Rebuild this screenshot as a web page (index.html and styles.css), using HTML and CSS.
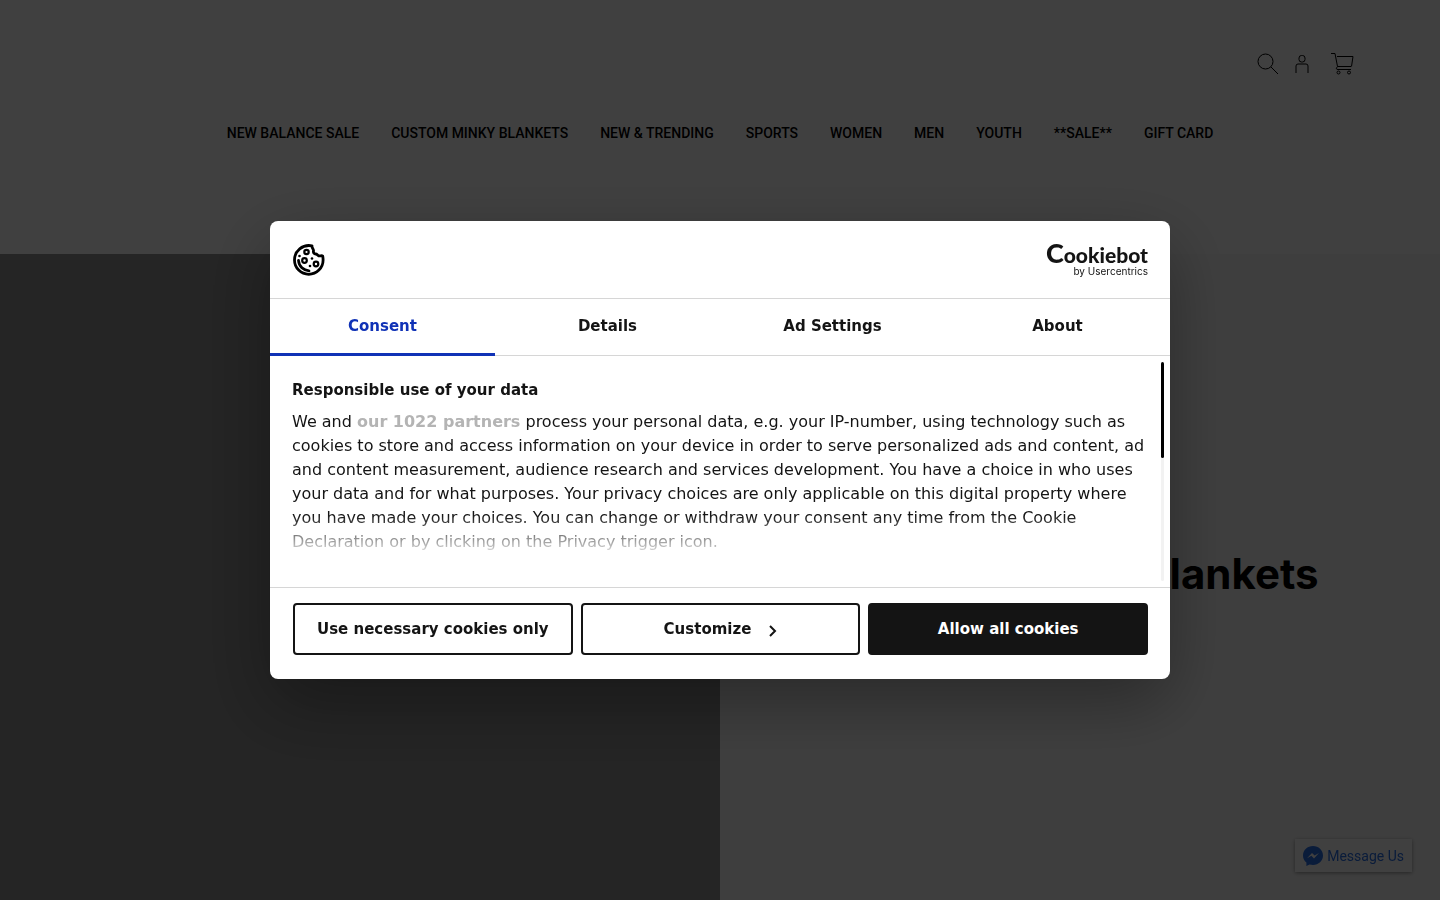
FILE: index.html
```
<!DOCTYPE html>
<html lang="en">
<head>
    <meta charset="UTF-8" />
    <meta name="viewport" content="width=device-width, initial-scale=1.0" />
    <title>Custom Minky Blankets</title>
    <link rel="stylesheet" href="styles.css">
</head>
<body>
    <header class="site-header">
        <div class="header-icons">
            <a href="#" aria-label="Search">
                <svg width="22" height="22" viewBox="0 0 22 22"><circle cx="8.5" cy="8.5" r="7.5"/><path d="M14 14l7 7"/></svg>
            </a>
            <a href="#" aria-label="Account">
                <svg width="14" height="20" viewBox="0 0 14 20"><rect x="4" y="1.500" width="6" height="6.500" rx="2.500"/><path d="M1 19v-7q0-2 2-2h8q2 0 2 2v7"/></svg>
            </a>
            <a href="#" aria-label="Cart" class="cart">
                <svg width="23" height="22" viewBox="0 0 23 22"><path d="M0 .5h4l2.500 13H20M6 3.500h16l-1.500 10M6.500 13.500q-2.500 3 .5 3h13"/><circle cx="7.500" cy="19.500" r="1.500"/><circle cx="18" cy="19.500" r="1.500"/></svg>
            </a>
        </div>
        <nav class="main-nav">
            <a href="#">NEW BALANCE SALE</a>
            <a href="#">CUSTOM MINKY BLANKETS</a>
            <a href="#">NEW &amp; TRENDING</a>
            <a href="#">SPORTS</a>
            <a href="#">WOMEN</a>
            <a href="#">MEN</a>
            <a href="#">YOUTH</a>
            <a href="#">**SALE**</a>
            <a href="#">GIFT CARD</a>
        </nav>
    </header>

    <main class="hero">
        <div class="hero-image"></div>
        <div class="hero-text">
            <h1>Custom Minky Blankets</h1>
        </div>
    </main>

    <a href="#" class="message-us">
        <svg width="20" height="20" viewBox="0 0 20 20"><path fill="#2a70e8" d="M10 0C4.400 0 0 4.100 0 9.500c0 3 1.300 5.400 3.400 7.100V20l3.200-1.600c1 .3 2.200.5 3.400.5 5.600 0 10-4.100 10-9.400S15.600 0 10 0z"/><path fill="#fff" d="M4 12.200l5-5.300 2.600 2.700L16 7l-5 5.400-2.600-2.700z"/></svg>
        <span>Message Us</span>
    </a>

    <div class="overlay">
        <div class="dialog" role="dialog" aria-label="Cookie consent">
            <div class="dialog-header">
                <svg width="32" height="32" viewBox="0 0 32 32" fill="none" stroke="#000" stroke-linecap="round" stroke-linejoin="round">
                    <path stroke-width="2.800" d="M19 1.800C9.500 0 1.500 7 1.500 16a14.300 14.300 0 0 0 28.600 0q0-2-.4-4c-1.200-1-2.500.3-4-.2s-1.500-1.800-3-1.800-2.700-1.500-2.200-3S18.500 4 19 1.800z"/>
                    <g stroke-width="2.200"><circle cx="13.500" cy="8" r="2.200"/><circle cx="11.500" cy="16.500" r="2.300"/><circle cx="23" cy="20" r="2.300"/></g>
                    <path stroke-width="2.800" d="M5.500 16.500c.5 6 5 10 10.500 10.300"/>
                    <g fill="#000" stroke="none"><circle cx="6.500" cy="12" r="1.300"/><circle cx="19" cy="14.500" r="1.300"/><circle cx="17" cy="22" r="1.300"/></g>
                </svg>
                <a href="#" class="logo">
                    <span class="logo-name"><span class="logo-c">C</span>ookiebot</span>
                    <span class="logo-by">by Usercentrics</span>
                </a>
            </div>

            <div class="tabs" role="tablist">
                <button class="tab active" role="tab" aria-selected="true">Consent</button>
                <button class="tab" role="tab">Details</button>
                <button class="tab" role="tab">Ad Settings</button>
                <button class="tab" role="tab">About</button>
            </div>

            <div class="dialog-body">
                <h2>Responsible use of your data</h2>
                <p>We and <a href="#">our 1022 partners</a> process your personal data, e.g. your IP-number, using technology such as cookies to store and access information on your device in order to serve personalized ads and content, ad and content measurement, audience research and services development. You have a choice in who uses your data and for what purposes. Your privacy choices are only applicable on this digital property where you have made your choices. You can change or withdraw your consent any time from the Cookie Declaration or by clicking on the Privacy trigger icon.</p>
                <div class="fade"></div>
                <div class="scroll-track"><div class="scroll-thumb"></div></div>
            </div>

            <div class="dialog-footer">
                <button class="btn">Use necessary cookies only</button>
                <button class="btn">Customize
                    <svg width="8" height="12" viewBox="0 0 8 12" fill="none" stroke="#141414" stroke-width="2"><path d="M1 1l5 5-5 5"/></svg>
                </button>
                <button class="btn btn-dark">Allow all cookies</button>
            </div>
        </div>
    </div>
</body>
</html>
```
FILE: styles.css
```
:root {
    --dark: #141414;
    --blue: #1032b6;
    --line: #d6d6d6;
}
* {
    box-sizing: border-box;
}
body {
    margin: 0;
    min-height: 100vh;
    display: flex;
    flex-direction: column;
    background: #fff;
    color: #000;
    font-family: Roboto, Arial, sans-serif;
}
a {
    color: inherit;
    text-decoration: none;
}
.site-header {
    height: 254px;
    padding-top: 52px;
}
.header-icons {
    display: flex;
    justify-content: flex-end;
    align-items: center;
    gap: 16px;
    height: 24px;
    padding-right: 86px;
}
.header-icons a {
    display: flex;
}
.header-icons .cart {
    margin-left: 6px;
}
.header-icons svg {
    fill: none;
    stroke: #000;
    stroke-width: 1;
}
.main-nav {
    display: flex;
    justify-content: center;
    gap: 32px;
    margin-top: 47px;
    font-size: 14px;
    font-weight: 500;
    line-height: 20px;
}
.hero {
    flex: 1;
    display: grid;
    grid-template-columns: 1fr 1fr;
}
.hero-image {
    background: #929292;
}
.hero-text {
    display: flex;
    align-items: center;
    justify-content: center;
    padding: 0 6px 6px 0;
    background: #f8f8f8;
}
.hero-text h1 {
    margin: 0;
    font-family: Inter, sans-serif;
    font-size: 42px;
    font-weight: 700;
    line-height: 48px;
}
.message-us {
    position: fixed;
    right: 28px;
    bottom: 28px;
    display: flex;
    align-items: center;
    gap: 4px;
    height: 33px;
    padding: 0 8px;
    background: #fff;
    color: #2a70e8;
    box-shadow: 0 1px 4px rgba(0, 0, 0, 0.4);
    font-size: 14px;
}
.overlay {
    position: fixed;
    inset: 0;
    display: flex;
    align-items: center;
    justify-content: center;
    background: rgba(0, 0, 0, 0.75);
    font-family: "DejaVu Sans", Verdana, sans-serif;
    color: var(--dark);
}
.dialog {
    width: 900px;
    max-width: 100%;
    background: #fff;
    border-radius: 8px;
    box-shadow: 0 24px 70px rgba(0, 0, 0, 0.35);
    overflow: hidden;
}
.dialog-header {
    display: flex;
    align-items: center;
    justify-content: space-between;
    height: 78px;
    padding: 0 22px 0 23px;
    border-bottom: 1px solid var(--line);
}
.logo {
    display: flex;
    flex-direction: column;
    align-items: flex-end;
}
.logo-name {
    font-family: Lato, sans-serif;
    font-size: 21px;
    font-weight: 900;
    line-height: 20px;
}
.logo-c {
    font-size: 27px;
}
.logo-by {
    font-family: Inter, sans-serif;
    font-size: 10px;
    line-height: 12px;
}
.tabs {
    display: flex;
    height: 57px;
    border-bottom: 1px solid var(--line);
}
.tab {
    flex: 1;
    margin-bottom: -1px;
    padding: 0;
    border: none;
    border-bottom: 3px solid transparent;
    background: none;
    color: var(--dark);
    font-family: inherit;
    font-size: 15px;
    font-weight: 700;
    cursor: pointer;
}
.tab.active {
    color: var(--blue);
    border-bottom-color: var(--blue);
}
.dialog-body {
    position: relative;
    height: 232px;
    padding: 22px 22px 0;
    border-bottom: 1px solid var(--line);
    line-height: 24px;
}
.dialog-body h2 {
    margin: 0 0 8px;
    font-size: 15px;
    line-height: 24px;
}
.dialog-body p {
    margin: 0;
    font-size: 16px;
}
.dialog-body p a {
    color: #b4b4b4;
    font-weight: 700;
}
.fade {
    position: absolute;
    left: 0;
    right: 20px;
    bottom: 28px;
    height: 44px;
    background: linear-gradient(rgba(255, 255, 255, 0), #fff);
}
.scroll-track {
    position: absolute;
    top: 6px;
    right: 6px;
    bottom: 6px;
    width: 3px;
    border-radius: 2px;
    background: #f2f2f2;
}
.scroll-thumb {
    height: 96px;
    border-radius: 2px;
    background: #000;
}
.dialog-footer {
    display: flex;
    gap: 8px;
    padding: 15px 22px 24px 23px;
}
.btn {
    flex: 1;
    display: flex;
    align-items: center;
    justify-content: center;
    gap: 18px;
    height: 52px;
    padding: 0;
    border: 2px solid var(--dark);
    border-radius: 4px;
    background: #fff;
    color: var(--dark);
    font-family: inherit;
    font-size: 15px;
    font-weight: 700;
    cursor: pointer;
}
.btn svg {
    margin-top: 4px;
}
.btn-dark {
    background: var(--dark);
    color: #fff;
}
```
